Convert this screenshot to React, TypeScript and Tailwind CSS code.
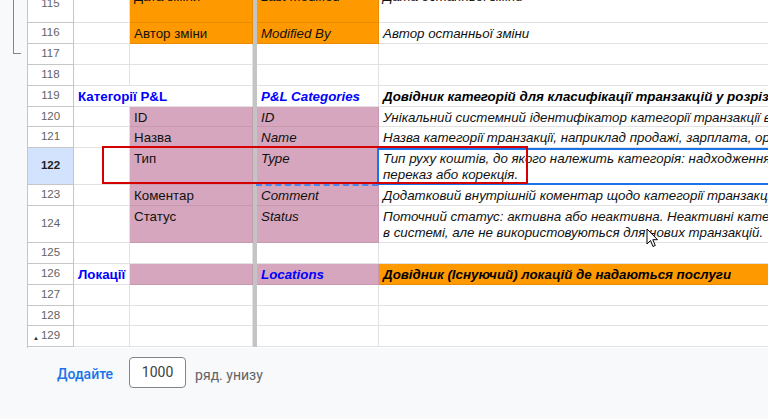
import React from "react";

type Cell = {
  text?: string;
  text2?: string;
  bg?: "orange" | "pink";
  style?: "blue" | "blueItalic" | "italic" | "boldItalic";
};

type Row = {
  n: number;
  h: number;
  a?: Cell;
  b?: Cell;
  c?: Cell;
  d?: Cell;
  spanAB?: boolean;
  selected?: boolean;
};

const rows: Row[] = [
  { n: 115, h: 37, b: { text: "Дата зміни", bg: "orange" }, c: { text: "Last Modified", bg: "orange", style: "italic" }, d: { text: "Дата останньої зміни", style: "italic" } },
  { n: 116, h: 21, b: { text: "Автор зміни", bg: "orange" }, c: { text: "Modified By", bg: "orange", style: "italic" }, d: { text: "Автор останньої зміни", style: "italic" } },
  { n: 117, h: 21 },
  { n: 118, h: 21 },
  { n: 119, h: 21, spanAB: true, a: { text: "Категорії P&L", style: "blue" }, c: { text: "P&L Categories", style: "blueItalic" }, d: { text: "Довідник категорій для класифікації транзакцій у розрізі P&L звітності", style: "boldItalic" } },
  { n: 120, h: 20, b: { text: "ID", bg: "pink" }, c: { text: "ID", bg: "pink", style: "italic" }, d: { text: "Унікальний системний ідентифікатор категорії транзакції в базі даних", style: "italic" } },
  { n: 121, h: 21, b: { text: "Назва", bg: "pink" }, c: { text: "Name", bg: "pink", style: "italic" }, d: { text: "Назва категорії транзакції, наприклад продажі, зарплата, оренда", style: "italic" } },
  { n: 122, h: 37, selected: true, b: { text: "Тип", bg: "pink" }, c: { text: "Type", bg: "pink", style: "italic" }, d: { text: "Тип руху коштів, до якого належить категорія: надходження, витрата,", text2: "переказ або корекція.", style: "italic" } },
  { n: 123, h: 21, b: { text: "Коментар", bg: "pink" }, c: { text: "Comment", bg: "pink", style: "italic" }, d: { text: "Додатковий внутрішній коментар щодо категорії транзакції", style: "italic" } },
  { n: 124, h: 37, b: { text: "Статус", bg: "pink" }, c: { text: "Status", bg: "pink", style: "italic" }, d: { text: "Поточний статус: активна або неактивна. Неактивні категорії залишаються", text2: "в системі, але не використовуються для нових транзакцій.", style: "italic" } },
  { n: 125, h: 21 },
  { n: 126, h: 21, a: { text: "Локації", style: "blue" }, b: { bg: "pink" }, c: { text: "Locations", bg: "pink", style: "blueItalic" }, d: { text: "Довідник (Існуючий) локацій де надаються послуги", bg: "orange", style: "boldItalic" } },
  { n: 127, h: 21 },
  { n: 128, h: 20 },
  { n: 129, h: 21 },
];

function cellClass(cell?: Cell) {
  const bg =
    cell?.bg === "orange"
      ? "bg-[#ff9900] border-[#e88b00]"
      : cell?.bg === "pink"
      ? "bg-[#d5a6bd] border-[#c898ae]"
      : "bg-white border-[#e2e2e2]";
  const st =
    cell?.style === "blue"
      ? "font-bold text-[#0000ff]"
      : cell?.style === "blueItalic"
      ? "font-bold italic text-[#0000ff]"
      : cell?.style === "boldItalic"
      ? "font-bold italic text-black"
      : cell?.style === "italic"
      ? "italic text-[#111]"
      : "text-[#111]";
  return `${bg} ${st} border-r border-b px-[4px] pt-[3px] text-[13.33px] leading-[16px] whitespace-nowrap overflow-hidden`;
}

function GridCell({ cell }: { cell?: Cell }) {
  return (
    <div className={cellClass(cell)}>
      {cell?.text && <div>{cell.text}</div>}
      {cell?.text2 && <div>{cell.text2}</div>}
    </div>
  );
}

function Cursor() {
  return (
    <svg width="13" height="20" viewBox="0 0 13 20" className="absolute left-[646px] top-[228px]">
      <path d="M1 1 L1 16 L4.5 12.5 L7 18.5 L9.3 17.5 L6.8 11.7 L11.5 11.7 Z" fill="white" stroke="black" strokeWidth="1" strokeLinejoin="round" />
    </svg>
  );
}

export default function App() {
  return (
    <div className="w-[768px] h-[419px] overflow-hidden bg-[#f8f9fa] font-['Liberation_Sans',Arial,sans-serif]">
      <div className="relative flex h-[348px] overflow-hidden">
        <div className="w-[27px] shrink-0">
          <div className="ml-[13px] w-[8px] h-[54px] border-l border-b border-[#80868b]" />
        </div>
        <div className="flex-1 -mt-[14px] border-l border-[#c4c7c5] bg-white overflow-hidden">
          {rows.map((r) => (
            <div
              key={r.n}
              className="grid grid-cols-[46px_56px_123px_4px_122px_390px]"
              style={{ height: r.h }}
            >
              <div
                className={`relative flex items-center justify-center border-r border-b border-[#c4c7c5] text-[11.5px] ${
                  r.selected ? "bg-[#d3e3fd] font-bold text-[#1f1f1f]" : "bg-white text-[#5f6368]"
                }`}
              >
                {r.n === 129 && <span className="absolute left-[5px] top-[8px] text-[6px] text-[#333]">▲</span>}
                {r.n}
              </div>
              {r.spanAB ? (
                <div className="col-span-2 bg-white border-r border-b border-[#e2e2e2] pl-[4px] pt-[3px] text-[13.33px] leading-[16px] font-bold text-[#0000ff] whitespace-nowrap">
                  {r.a?.text}
                </div>
              ) : (
                <>
                  <GridCell cell={r.a} />
                  <GridCell cell={r.b} />
                </>
              )}
              <div className="bg-[#c4c4c4]" />
              <GridCell cell={r.c} />
              <GridCell cell={r.d} />
            </div>
          ))}
        </div>
        <div className="absolute left-[377px] top-[148px] w-[400px] h-[37px] border-2 border-[#1a73e8]" />
        <div className="absolute left-[256px] top-[184px] w-[122px] border-t-2 border-dashed border-[#4a86e8]" />
        <div className="absolute left-[102px] top-[146px] w-[426px] h-[38px] border-2 border-[#d40000]" />
        <Cursor />
      </div>
      <div className="flex items-center pl-[57px] pt-[9px] font-['Roboto',Arial,sans-serif] text-[14px]">
        <span className="mt-[4px] font-medium text-[#1a73e8]">Додайте</span>
        <div className="ml-[16px] w-[57px] h-[31px] flex items-center justify-center rounded-[4px] border border-[#80868b] bg-white text-[#3c4043]">
          1000
        </div>
        <span className="ml-[9px] mt-[6px] text-[#5f6368]">ряд. унизу</span>
      </div>
    </div>
  );
}
